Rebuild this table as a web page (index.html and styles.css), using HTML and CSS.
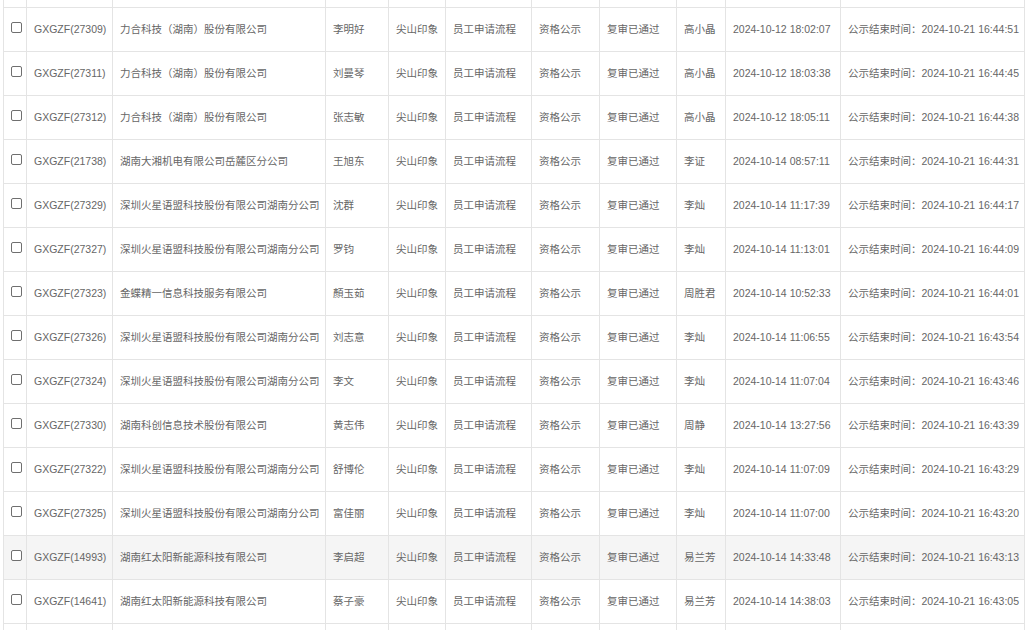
FILE: index.html
```html
<!DOCTYPE html>
<html lang="zh-CN">
<head>
<meta charset="utf-8">
<title>公示列表</title>
<link rel="stylesheet" href="styles.css">
</head>
<body>
<div class="viewport">
<table class="grid">
  <colgroup>
    <col class="c-check"><col class="c-no"><col class="c-company"><col class="c-name"><col class="c-park"><col class="c-flow"><col class="c-type"><col class="c-status"><col class="c-op"><col class="c-time"><col class="c-end">
  </colgroup>
  <tbody>
    <tr class="stub"><td></td><td></td><td></td><td></td><td></td><td></td><td></td><td></td><td></td><td></td><td></td></tr>
    <tr><td class="chk"><span class="box"></span></td><td>GXGZF(27309)</td><td>力合科技（湖南）股份有限公司</td><td>李明好</td><td>尖山印象</td><td>员工申请流程</td><td>资格公示</td><td>复审已通过</td><td>高小晶</td><td>2024-10-12 18:02:07</td><td>公示结束时间：2024-10-21 16:44:51</td></tr>
    <tr><td class="chk"><span class="box"></span></td><td>GXGZF(27311)</td><td>力合科技（湖南）股份有限公司</td><td>刘曼琴</td><td>尖山印象</td><td>员工申请流程</td><td>资格公示</td><td>复审已通过</td><td>高小晶</td><td>2024-10-12 18:03:38</td><td>公示结束时间：2024-10-21 16:44:45</td></tr>
    <tr><td class="chk"><span class="box"></span></td><td>GXGZF(27312)</td><td>力合科技（湖南）股份有限公司</td><td>张志敏</td><td>尖山印象</td><td>员工申请流程</td><td>资格公示</td><td>复审已通过</td><td>高小晶</td><td>2024-10-12 18:05:11</td><td>公示结束时间：2024-10-21 16:44:38</td></tr>
    <tr><td class="chk"><span class="box"></span></td><td>GXGZF(21738)</td><td>湖南大湘机电有限公司岳麓区分公司</td><td>王旭东</td><td>尖山印象</td><td>员工申请流程</td><td>资格公示</td><td>复审已通过</td><td>李证</td><td>2024-10-14 08:57:11</td><td>公示结束时间：2024-10-21 16:44:31</td></tr>
    <tr><td class="chk"><span class="box"></span></td><td>GXGZF(27329)</td><td>深圳火星语盟科技股份有限公司湖南分公司</td><td>沈群</td><td>尖山印象</td><td>员工申请流程</td><td>资格公示</td><td>复审已通过</td><td>李灿</td><td>2024-10-14 11:17:39</td><td>公示结束时间：2024-10-21 16:44:17</td></tr>
    <tr><td class="chk"><span class="box"></span></td><td>GXGZF(27327)</td><td>深圳火星语盟科技股份有限公司湖南分公司</td><td>罗钧</td><td>尖山印象</td><td>员工申请流程</td><td>资格公示</td><td>复审已通过</td><td>李灿</td><td>2024-10-14 11:13:01</td><td>公示结束时间：2024-10-21 16:44:09</td></tr>
    <tr><td class="chk"><span class="box"></span></td><td>GXGZF(27323)</td><td>金蝶精一信息科技服务有限公司</td><td>顏玉茹</td><td>尖山印象</td><td>员工申请流程</td><td>资格公示</td><td>复审已通过</td><td>周胜君</td><td>2024-10-14 10:52:33</td><td>公示结束时间：2024-10-21 16:44:01</td></tr>
    <tr><td class="chk"><span class="box"></span></td><td>GXGZF(27326)</td><td>深圳火星语盟科技股份有限公司湖南分公司</td><td>刘志意</td><td>尖山印象</td><td>员工申请流程</td><td>资格公示</td><td>复审已通过</td><td>李灿</td><td>2024-10-14 11:06:55</td><td>公示结束时间：2024-10-21 16:43:54</td></tr>
    <tr><td class="chk"><span class="box"></span></td><td>GXGZF(27324)</td><td>深圳火星语盟科技股份有限公司湖南分公司</td><td>李文</td><td>尖山印象</td><td>员工申请流程</td><td>资格公示</td><td>复审已通过</td><td>李灿</td><td>2024-10-14 11:07:04</td><td>公示结束时间：2024-10-21 16:43:46</td></tr>
    <tr><td class="chk"><span class="box"></span></td><td>GXGZF(27330)</td><td>湖南科创信息技术股份有限公司</td><td>黄志伟</td><td>尖山印象</td><td>员工申请流程</td><td>资格公示</td><td>复审已通过</td><td>周静</td><td>2024-10-14 13:27:56</td><td>公示结束时间：2024-10-21 16:43:39</td></tr>
    <tr><td class="chk"><span class="box"></span></td><td>GXGZF(27322)</td><td>深圳火星语盟科技股份有限公司湖南分公司</td><td>舒博伦</td><td>尖山印象</td><td>员工申请流程</td><td>资格公示</td><td>复审已通过</td><td>李灿</td><td>2024-10-14 11:07:09</td><td>公示结束时间：2024-10-21 16:43:29</td></tr>
    <tr><td class="chk"><span class="box"></span></td><td>GXGZF(27325)</td><td>深圳火星语盟科技股份有限公司湖南分公司</td><td>富佳丽</td><td>尖山印象</td><td>员工申请流程</td><td>资格公示</td><td>复审已通过</td><td>李灿</td><td>2024-10-14 11:07:00</td><td>公示结束时间：2024-10-21 16:43:20</td></tr>
    <tr class="hover"><td class="chk"><span class="box"></span></td><td>GXGZF(14993)</td><td>湖南红太阳新能源科技有限公司</td><td>李启超</td><td>尖山印象</td><td>员工申请流程</td><td>资格公示</td><td>复审已通过</td><td>易兰芳</td><td>2024-10-14 14:33:48</td><td>公示结束时间：2024-10-21 16:43:13</td></tr>
    <tr><td class="chk"><span class="box"></span></td><td>GXGZF(14641)</td><td>湖南红太阳新能源科技有限公司</td><td>蔡子豪</td><td>尖山印象</td><td>员工申请流程</td><td>资格公示</td><td>复审已通过</td><td>易兰芳</td><td>2024-10-14 14:38:03</td><td>公示结束时间：2024-10-21 16:43:05</td></tr>
    <tr><td class="chk"></td><td></td><td></td><td></td><td></td><td></td><td></td><td></td><td></td><td></td><td></td></tr>
  </tbody>
</table>
</div>
</body>
</html>
```
FILE: styles.css
```css
html, body {
  margin: 0;
  padding: 0;
  background: #ffffff;
}

.viewport {
  width: 1026px;
  height: 630px;
  overflow: hidden;
}

.grid {
  margin-left: 3px;
  border-collapse: collapse;
  table-layout: fixed;
  width: 1022px;
  font-family: "Liberation Sans", "Noto Sans CJK SC", sans-serif;
  font-size: 10.5px;
  color: #666666;
}

.c-check { width: 23px; }
.c-no { width: 86px; }
.c-company { width: 213px; }
.c-name { width: 63px; }
.c-park { width: 57px; }
.c-flow { width: 86px; }
.c-type { width: 68px; }
.c-status { width: 77px; }
.c-op { width: 49px; }
.c-time { width: 115px; }
.c-end { width: 184px; }

.grid tr {
  height: 44px;
}

.grid tr.stub {
  height: 7px;
}

.grid td {
  border: 1px solid #e4e4e4;
  padding: 0 0 0 7px;
  white-space: nowrap;
  overflow: hidden;
  vertical-align: middle;
  line-height: 14px;
}

.grid tr.stub td {
  border-top: none;
  padding: 0;
}

.grid td.chk {
  padding: 0;
  text-align: center;
  vertical-align: top;
}

.box {
  display: block;
  width: 9px;
  height: 9px;
  margin: 14px 0 0 7px;
  border: 1px solid #6f6f6f;
  border-radius: 2px;
  background: #ffffff;
}

.grid tr.hover td {
  background: #f5f5f5;
}
```
